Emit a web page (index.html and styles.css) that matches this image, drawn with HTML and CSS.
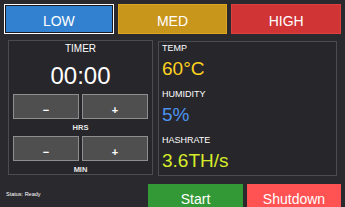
FILE: index.html
```html
<!DOCTYPE html>
<html lang="en">
<head>
    <meta charset="UTF-8">
    <title>Miner Control</title>
    <link rel="stylesheet" href="styles.css">
</head>
<body>
    <div class="modes">
        <button class="mode low active">LOW</button>
        <button class="mode med">MED</button>
        <button class="mode high">HIGH</button>
    </div>
    <div class="main">
        <div class="timer">
            <div class="timer-title">TIMER</div>
            <div class="clock">00:00</div>
            <div class="adjust">
                <button class="step">&minus;</button>
                <button class="step">+</button>
            </div>
            <div class="unit">HRS</div>
            <div class="adjust">
                <button class="step">&minus;</button>
                <button class="step">+</button>
            </div>
            <div class="unit unit-last">MIN</div>
        </div>
        <div class="stats">
            <div class="stat-label">TEMP</div>
            <div class="stat-value temp">60°C</div>
            <div class="stat-label">HUMIDITY</div>
            <div class="stat-value humidity">5%</div>
            <div class="stat-label">HASHRATE</div>
            <div class="stat-value hashrate">3.6TH/s</div>
        </div>
    </div>
    <div class="footer">
        <span class="status">Status: Ready</span>
        <button class="action start">Start</button>
        <button class="action shutdown">Shutdown</button>
    </div>
</body>
</html>
```

FILE: styles.css
```css
body {
    margin: 0;
    width: 345px;
    height: 207px;
    overflow: hidden;
    background-color: #2a292e;
    color: #fff;
    font-family: "Liberation Sans", Arial, sans-serif;
}
button {
    font-family: inherit;
    color: #fff;
    cursor: pointer;
    padding: 0;
}
.modes {
    display: flex;
    gap: 4px;
    padding: 4px 4px 0 4px;
}
.mode {
    width: 110px;
    height: 30px;
    padding-top: 3px;
    font-size: 14px;
    border: 1px solid;
}
.low {
    background-color: #3181d0;
    border-color: #2a6cb0;
}
.low.active {
    border: 1px solid #fff;
    outline: 1px solid #1a1a1e;
    outline-offset: -2px;
}
.med {
    background-color: #c9961c;
    border-color: #dba520;
}
.high {
    background-color: #d03435;
    border-color: #de4040;
}
.main {
    display: flex;
    gap: 5px;
    padding: 6px 8px 0 8px;
}
.timer {
    width: 144px;
    height: 133px;
    border: 1px solid #4c4b50;
    background-color: #27262b;
    text-align: center;
}
.timer-title {
    font-size: 10px;
    line-height: 14px;
    margin-top: 1px;
}
.clock {
    font-size: 24px;
    line-height: 36px;
    margin-top: 2px;
}
.adjust {
    display: grid;
    grid-template-columns: 66px 66px;
    gap: 3px;
    padding: 0 4px;
}
.step {
    height: 25px;
    background-color: #4f4f50;
    border: 1px solid #8e8e8e;
    font-size: 11px;
    font-weight: bold;
    padding-top: 6px;
}
.unit {
    font-size: 7.5px;
    font-weight: bold;
    color: #e6e6e6;
    line-height: 17px;
}
.unit-last {
    line-height: 12px;
    margin-top: 3px;
}
.stats {
    width: 176px;
    height: 133px;
    margin-top: 1px;
    border: 1px solid #4c4b50;
    background-color: #27262b;
    padding-left: 3px;
}
.stat-label {
    font-size: 9px;
    line-height: 13px;
}
.stat-value {
    font-size: 19px;
    line-height: 28px;
    margin-bottom: 5px;
}
.temp {
    color: #ffd21f;
}
.humidity {
    color: #4d94ef;
}
.hashrate {
    color: #d6ec2a;
}
.footer {
    display: flex;
    align-items: center;
    gap: 4px;
    padding: 8px 4px 0 6px;
}
.status {
    flex: 1;
    font-size: 5.5px;
    margin-top: -6px;
}
.action {
    height: 26px;
    width: 95px;
    border: none;
    font-size: 14px;
    padding-top: 3px;
}
.start {
    background-color: #339936;
}
.shutdown {
    background-color: #ff5252;
    width: 94px;
}
```
